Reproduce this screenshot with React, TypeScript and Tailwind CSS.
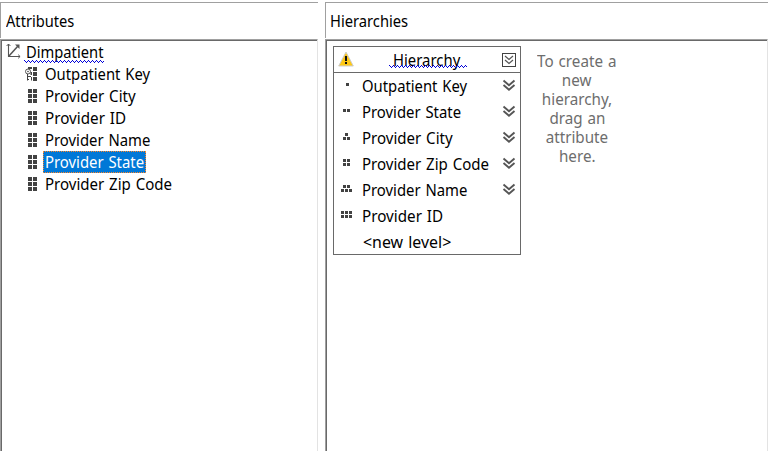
import type { ReactNode } from "react";

const attributes = [
  { name: "Outpatient Key", fit: "scale-x-[0.925]" },
  { name: "Provider City", fit: "scale-x-[0.94]" },
  { name: "Provider ID", fit: "scale-x-[0.95]" },
  { name: "Provider Name", fit: "scale-x-[0.93]" },
  { name: "Provider State", fit: "scale-x-[0.93]" },
  { name: "Provider Zip Code", fit: "scale-x-[0.94]" },
];

const levels = [
  { name: "Outpatient Key", fit: "scale-x-[0.925]" },
  { name: "Provider State", fit: "scale-x-[0.93]" },
  { name: "Provider City", fit: "scale-x-[0.94]" },
  { name: "Provider Zip Code", fit: "scale-x-[0.94]" },
  { name: "Provider Name", fit: "scale-x-[0.93]" },
  { name: "Provider ID", fit: "scale-x-[0.95]" },
];

const promptLines = ["To create a", "new", "hierarchy,", "drag an", "attribute", "here."];

// Dot positions of each level marker, on a 12x8 grid.
const levelDots: number[][][] = [
  [[5, 3]],
  [[2, 3], [6, 3]],
  [[4, 1], [2, 5], [6, 5]],
  [[2, 1], [6, 1], [2, 5], [6, 5]],
  [[2, 1], [6, 1], [0, 5], [4, 5], [8, 5]],
  [[0, 1], [4, 1], [8, 1], [0, 5], [4, 5], [8, 5]],
];

function Label({ children, fit = "scale-x-[0.93]" }: { children: ReactNode; fit?: string }) {
  return (
    <span className={`inline-block origin-left whitespace-nowrap [word-spacing:1px] ${fit}`}>{children}</span>
  );
}

function Squiggle({ width }: { width: number }) {
  let d = "M0.5 0.5";
  for (let x = 2; x <= width; x += 2) d += `L${x + 0.5} ${x % 4 === 2 ? 2.5 : 0.5}`;
  return (
    <svg className="block" width={width} height="4" shapeRendering="crispEdges" fill="none" stroke="#0000d8">
      <path d={d} />
    </svg>
  );
}

function AttributeIcon({ isKey }: { isKey: boolean }) {
  return (
    <svg width="15" height="16" shapeRendering="crispEdges" fill="#424242">
      {[1, 6, 11].map((y) => (
        <g key={y}>
          {!isKey && <rect x="4" y={y} width="4" height="4" />}
          <rect x="9" y={y} width="4" height="4" />
        </g>
      ))}
      {isKey && (
        <g shapeRendering="auto">
          <path d="M4 1h4v2H4zM6.5 6H8v3H6.5z" />
          <circle cx="4" cy="5.5" r="2.5" fill="none" stroke="#555" />
          <circle cx="4" cy="5.5" r=".8" />
          <path d="M3.5 8v6.5M3.5 10.5H7M3.5 13.5H5M7.5 11v3.5" fill="none" stroke="#424242" />
        </g>
      )}
    </svg>
  );
}

function DimensionIcon() {
  return (
    <svg width="15" height="16" fill="none" stroke="#555">
      <path d="M2.5 1v12.5H14" strokeWidth="1.1" />
      <path d="M2.5 13.5L12 3" strokeWidth="1.5" />
      <path d="M.6 3l1.9-2 1.9 2M12.2 11.7l1.9 1.8-1.9 1.8" />
      <path d="M9 1.5h4.5V6z" fill="#555" stroke="none" />
    </svg>
  );
}

function LevelIcon({ dots }: { dots: number[][] }) {
  return (
    <svg width="12" height="10" shapeRendering="crispEdges" fill="#424242">
      {dots.map(([x, y]) => (
        <rect key={`${x}-${y}`} x={x} y={y} width="3" height="3" />
      ))}
    </svg>
  );
}

function Chevrons({ boxed = false }: { boxed?: boolean }) {
  return (
    <svg width="14" height="14" fill="none" stroke="#555">
      {boxed ? (
        <>
          <rect x=".5" y=".5" width="13" height="13" stroke="#424242" />
          <path d="M3 3l4 3.5L11 3M3 7l4 3.5L11 7" strokeWidth="1.2" />
        </>
      ) : (
        <path d="M1.5 1.5L7 6.2l5.5-4.7M1.5 6L7 10.7 12.5 6" strokeWidth="1.9" />
      )}
    </svg>
  );
}

function Warning() {
  return (
    <svg width="16" height="16">
      <path d="M8 1L15.3 15H.7z" fill="#ffc814" stroke="#ccc" strokeLinejoin="round" />
      <path d="M7 5h2v5H7zM7 11h2v2H7z" fill="#111" />
    </svg>
  );
}

interface PaneProps {
  title: string;
  fit: string;
  className: string;
  headerPadding: string;
  children: ReactNode;
}

function Pane({ title, fit, className, headerPadding, children }: PaneProps) {
  return (
    <section className={`flex h-full shrink-0 flex-col ${className}`}>
      <header className={`mt-[2px] h-9 border-t border-l border-[#a0a0a0] pt-[7px] ${headerPadding}`}>
        <Label fit={fit}>{title}</Label>
      </header>
      <div className="mt-px flex-1 border-t border-r border-l border-t-[#a0a0a0] border-r-[#e3e3e3] border-l-[#a0a0a0]">
        <div className="h-full border-t border-l border-[#696969]">{children}</div>
      </div>
    </section>
  );
}

export default function App() {
  return (
    <main className="flex h-[451px] w-[775px] overflow-hidden bg-white font-['Noto_Sans','Open_Sans',sans-serif] text-[16px] leading-[22px] text-black">
      <Pane title="Attributes" fit="scale-x-[0.915]" headerPadding="pl-[5px]" className="mr-[7px] w-[318px]">
        <div className="flex h-[22px] pl-1">
          <span className="mt-[2px] mr-[5px] w-[15px]"><DimensionIcon /></span>
          <div className="relative">
            <Label fit="scale-x-[0.92]">Dimpatient</Label>
            <span className="absolute top-[19px] left-[-2px]"><Squiggle width={80} /></span>
          </div>
        </div>
        {attributes.map(({ name, fit }, index) => (
          <div key={name} className="flex h-[22px] pl-[22px]">
            <span className="mt-[3px] mr-1 w-[15px]"><AttributeIcon isKey={index === 0} /></span>
            {name === "Provider State" ? (
              <span className="h-[22px] w-[103px] border border-dotted border-[#ff8728] bg-[#0078d7] pl-px leading-5 text-white">
                <Label fit={fit}>{name}</Label>
              </span>
            ) : (
              <span className="pl-[2px]"><Label fit={fit}>{name}</Label></span>
            )}
          </div>
        ))}
      </Pane>
      <Pane title="Hierarchies" fit="scale-x-[0.92]" headerPadding="pl-[4px]" className="w-[443px]">
        <div className="flex items-start pt-[5px] pl-[6px]">
          <div className="h-[209px] w-[188px] border border-[#696969]">
            <div className="flex h-[26px] border-b border-[#696969] pl-1">
              <span className="mt-[4px] w-[55px]"><Warning /></span>
              <div className="relative w-[110px] pt-[2px]">
                <Label>Hierarchy</Label>
                <span className="absolute top-[18px] left-[-4px]"><Squiggle width={78} /></span>
              </div>
              <span className="mt-[6px] -ml-px"><Chevrons boxed /></span>
            </div>
            {levels.map(({ name, fit }, index) => (
              <div key={name} className="flex h-[26px] pl-[7px]">
                <span className="mt-[7px] w-[21px]"><LevelIcon dots={levelDots[index]} /></span>
                <span className="w-[140px] pt-[2px]"><Label fit={fit}>{name}</Label></span>
                {index < 5 && <span className="mt-[6px]"><Chevrons /></span>}
              </div>
            ))}
            <div className="pt-[2px] pl-[29px]"><Label fit="scale-x-[0.995]">&lt;new level&gt;</Label></div>
          </div>
          <div className="ml-[10px] flex w-[92px] flex-col items-center pt-[6px] leading-[19px] text-[#6d6d6d]">
            {promptLines.map((line) => (
              <span key={line} className="scale-x-[0.95] whitespace-nowrap [word-spacing:1px]">{line}</span>
            ))}
          </div>
        </div>
      </Pane>
    </main>
  );
}
